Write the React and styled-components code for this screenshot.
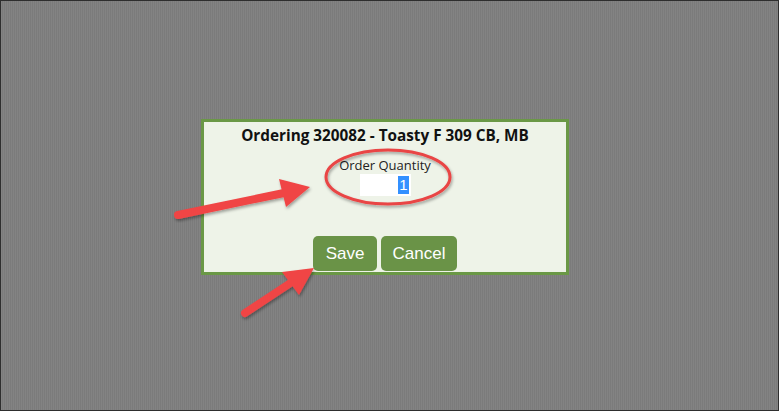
import React from "react";
import styled, { createGlobalStyle } from "styled-components";

const GlobalStyle = createGlobalStyle`
  html, body {
    margin: 0;
    padding: 0;
    background: #808080;
  }
`;

const Page = styled.div`
  position: relative;
  box-sizing: border-box;
  width: 779px;
  height: 411px;
  border: 1px solid #2e2e2e;
  background-color: #7f7f7f;
  background-image: repeating-linear-gradient(
    90deg,
    rgba(255, 255, 255, 0.03) 0px,
    rgba(255, 255, 255, 0.03) 1px,
    rgba(0, 0, 0, 0.03) 1px,
    rgba(0, 0, 0, 0.03) 2px
  );
  display: flex;
  align-items: flex-start;
  padding: 118px 0 0 200px;
  overflow: hidden;
`;

const Dialog = styled.div`
  box-sizing: border-box;
  width: 368px;
  height: 156px;
  border: 3px solid #6a9846;
  background: #eef3e8;
  display: flex;
  flex-direction: column;
  align-items: center;
  padding: 3px 0 1px;
`;

const Title = styled.h1`
  margin: 0;
  font-family: "Open Sans", "DejaVu Sans", sans-serif;
  font-weight: 700;
  font-size: 15.3px;
  line-height: 21px;
  color: #111;
`;

const Label = styled.div`
  margin-top: 11px;
  font-family: "Open Sans", "DejaVu Sans", sans-serif;
  font-size: 13px;
  line-height: 16px;
  color: #222;
`;

const QtyBox = styled.div`
  box-sizing: border-box;
  width: 51px;
  height: 22px;
  margin-top: 1px;
  background: #fff;
  display: flex;
  justify-content: flex-end;
  align-items: center;
  padding-right: 2px;
`;

const Selected = styled.span`
  background: #3390ff;
  color: #fff;
  font-family: "Liberation Sans", Arial, sans-serif;
  font-size: 15px;
  line-height: 18px;
  padding: 0 1px;
`;

const Buttons = styled.div`
  margin-top: auto;
  display: flex;
  gap: 4px;
`;

const Button = styled.button`
  box-sizing: border-box;
  width: ${(p) => p.$w}px;
  height: 35px;
  padding: 0;
  border: none;
  border-radius: 5px;
  background: #6a9347;
  color: #fff;
  font-family: "Liberation Sans", Arial, sans-serif;
  font-size: 17px;
`;

const Overlay = styled.svg`
  position: absolute;
  left: 0;
  top: 0;
  pointer-events: none;
`;

function Arrow({ tail, neck, tip, wing1, wing2 }) {
  return (
    <g filter="url(#shadow)">
      <line
        x1={tail[0]}
        y1={tail[1]}
        x2={neck[0]}
        y2={neck[1]}
        stroke="#f04545"
        strokeWidth="8"
        strokeLinecap="round"
      />
      <polygon
        points={`${tip.join(",")} ${wing1.join(",")} ${wing2.join(",")}`}
        fill="#f04545"
      />
    </g>
  );
}

export default function App() {
  return (
    <>
      <GlobalStyle />
      <Page>
        <Dialog>
          <Title>Ordering 320082 - Toasty F 309 CB, MB</Title>
          <Label>Order Quantity</Label>
          <QtyBox>
            <Selected>1</Selected>
          </QtyBox>
          <Buttons>
            <Button $w={64}>Save</Button>
            <Button $w={76}>Cancel</Button>
          </Buttons>
        </Dialog>
        <Overlay width="779" height="411" viewBox="-1 -1 779 411">
          <defs>
            <filter id="shadow" x="-20%" y="-20%" width="140%" height="140%">
              <feDropShadow dx="1" dy="2" stdDeviation="1.5" floodColor="#000" floodOpacity="0.35" />
            </filter>
          </defs>
          <ellipse
            cx="386"
            cy="175"
            rx="62"
            ry="27"
            fill="none"
            stroke="#e94444"
            strokeWidth="3"
            filter="url(#shadow)"
          />
          <Arrow tail={[176, 213]} neck={[282, 191]} tip={[308, 185]} wing1={[277, 177]} wing2={[284, 205]} />
          <Arrow tail={[243, 311]} neck={[290, 280]} tip={[312, 266]} wing1={[280, 270]} wing2={[297, 293]} />
        </Overlay>
      </Page>
    </>
  );
}
